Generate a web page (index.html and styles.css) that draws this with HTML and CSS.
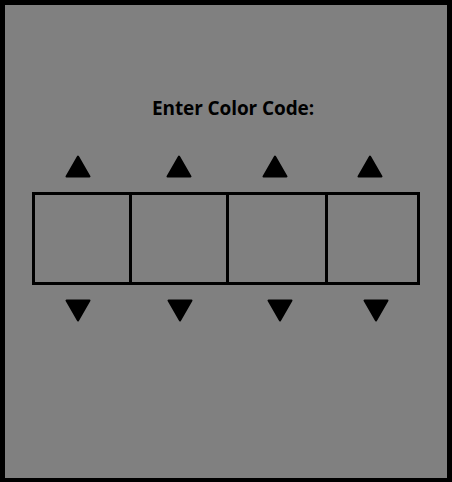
FILE: index.html
```html
<!DOCTYPE html>
<html lang="en">

<head>
    <meta charset="UTF-8">
    <meta name="viewport" content="width=device-width, initial-scale=1.0">
    <title>Color Code</title>
    <link rel="stylesheet" href="styles.css">
</head>

<body>
    <div class="frame">
        <h1 class="title">Enter Color Code:</h1>

        <div class="arrows up">
            <svg class="arrow" viewBox="0 0 26 23"><polygon points="13,1.5 24.5,21.5 1.5,21.5" /></svg>
            <svg class="arrow" viewBox="0 0 26 23"><polygon points="13,1.5 24.5,21.5 1.5,21.5" /></svg>
            <svg class="arrow" viewBox="0 0 26 23"><polygon points="13,1.5 24.5,21.5 1.5,21.5" /></svg>
            <svg class="arrow" viewBox="0 0 26 23"><polygon points="13,1.5 24.5,21.5 1.5,21.5" /></svg>
        </div>

        <div class="code">
            <div class="cell c1"></div>
            <div class="cell c2"></div>
            <div class="cell c3"></div>
            <div class="cell c4"></div>
        </div>

        <div class="arrows down">
            <svg class="arrow" viewBox="0 0 26 23"><polygon points="1.5,1.5 24.5,1.5 13,21.5" /></svg>
            <svg class="arrow" viewBox="0 0 26 23"><polygon points="1.5,1.5 24.5,1.5 13,21.5" /></svg>
            <svg class="arrow" viewBox="0 0 26 23"><polygon points="1.5,1.5 24.5,1.5 13,21.5" /></svg>
            <svg class="arrow" viewBox="0 0 26 23"><polygon points="1.5,1.5 24.5,1.5 13,21.5" /></svg>
        </div>
    </div>
</body>

</html>
```
FILE: styles.css
```css
* {
    margin: 0;
    padding: 0;
    box-sizing: border-box;
}

body {
    background-color: #000;
}

.frame {
    width: 452px;
    height: 482px;
    padding-top: 91px;
    border: 5px solid #000;
    border-bottom-width: 4px;
    background-color: #808080;
}

.title {
    height: 24px;
    padding-left: 147px;
    font-family: "Open Sans", "Liberation Sans", sans-serif;
    font-size: 19px;
    font-weight: 700;
    line-height: 24px;
    color: #000;
    letter-spacing: -0.1px;
}

.arrows {
    display: flex;
    height: 23px;
    padding-left: 60px;
}

.arrows.up {
    margin-top: 35px;
}

.arrows.down {
    margin-top: 14px;
}

.arrow {
    width: 26px;
    height: 23px;
    display: block;
}

.arrow polygon {
    fill: #000;
    stroke: #000;
    stroke-width: 2;
    stroke-linejoin: round;
}

.up .arrow:nth-child(2) { margin-left: 75px; }
.up .arrow:nth-child(3) { margin-left: 70px; }
.up .arrow:nth-child(4) { margin-left: 69px; }

.down .arrow:nth-child(2) { margin-left: 76px; }
.down .arrow:nth-child(3) { margin-left: 74px; }
.down .arrow:nth-child(4) { margin-left: 70px; }

.code {
    display: flex;
    width: 388px;
    height: 93px;
    margin-top: 14px;
    margin-left: 27px;
    border: 3px solid #000;
}

.cell {
    height: 100%;
}

.cell + .cell {
    border-left: 3px solid #000;
}

.c1 { width: 94px; }
.c2 { width: 97px; }
.c3 { width: 99px; }
.c4 { width: 92px; }
```
